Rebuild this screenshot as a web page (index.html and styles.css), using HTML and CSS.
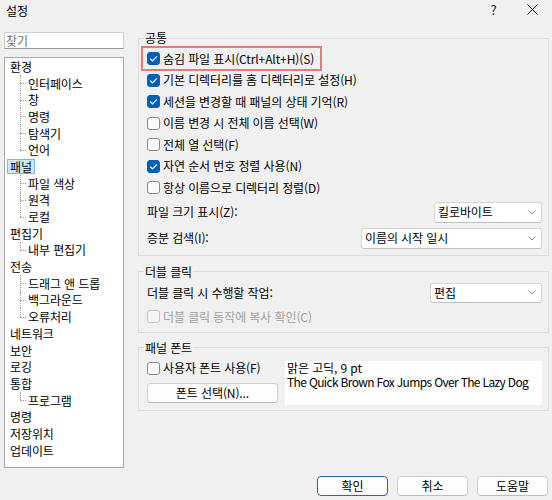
FILE: index.html
```html
<!DOCTYPE html>
<html lang="ko">
<head>
  <meta charset="UTF-8">
  <title>설정</title>
  <link rel="stylesheet" href="styles.css">
</head>
<body>
  <div class="dialog">
    <!-- Window caption -->
    <header class="titlebar">
      <span class="title">설정</span>
      <div class="caption-buttons">
        <span class="cap-btn">?</span>
        <span class="cap-btn">
          <svg width="11" height="11" viewBox="0 0 11 11"><path d="M0.5 0.5 L10.5 10.5 M10.5 0.5 L0.5 10.5" stroke="#1a1a1a" stroke-width="1" fill="none"/></svg>
        </span>
      </div>
    </header>

    <div class="main">
      <!-- Page navigation -->
      <aside class="nav">
        <div class="search">찾기</div>
        <ul class="tree">
          <li class="item"><span class="label">환경</span></li>
          <li class="item child"><span class="label">인터페이스</span></li>
          <li class="item child"><span class="label">창</span></li>
          <li class="item child"><span class="label">명령</span></li>
          <li class="item child"><span class="label">탐색기</span></li>
          <li class="item child last"><span class="label">언어</span></li>
          <li class="item"><span class="label selected">패널</span></li>
          <li class="item child"><span class="label">파일 색상</span></li>
          <li class="item child"><span class="label">원격</span></li>
          <li class="item child last"><span class="label">로컬</span></li>
          <li class="item"><span class="label">편집기</span></li>
          <li class="item child last"><span class="label">내부 편집기</span></li>
          <li class="item"><span class="label">전송</span></li>
          <li class="item child"><span class="label">드래그 앤 드롭</span></li>
          <li class="item child"><span class="label">백그라운드</span></li>
          <li class="item child last"><span class="label">오류처리</span></li>
          <li class="item"><span class="label">네트워크</span></li>
          <li class="item"><span class="label">보안</span></li>
          <li class="item"><span class="label">로깅</span></li>
          <li class="item"><span class="label">통합</span></li>
          <li class="item child last"><span class="label">프로그램</span></li>
          <li class="item"><span class="label">명령</span></li>
          <li class="item"><span class="label">저장위치</span></li>
          <li class="item"><span class="label">업데이트</span></li>
        </ul>
      </aside>

      <!-- Panels page -->
      <section class="page">
        <fieldset class="group group-common">
          <legend>공통</legend>
          <div class="check highlighted">
            <span class="box checked"><svg width="13" height="13" viewBox="0 0 13 13"><path d="M3.2 6.6 L5.5 8.9 L9.9 4.4" stroke="#fff" stroke-width="1.3" fill="none"/></svg></span>
            숨김 파일 표시(Ctrl+Alt+H)(S)
          </div>
          <div class="check">
            <span class="box checked"><svg width="13" height="13" viewBox="0 0 13 13"><path d="M3.2 6.6 L5.5 8.9 L9.9 4.4" stroke="#fff" stroke-width="1.3" fill="none"/></svg></span>
            기본 디렉터리를 홈 디렉터리로 설정(H)
          </div>
          <div class="check">
            <span class="box checked"><svg width="13" height="13" viewBox="0 0 13 13"><path d="M3.2 6.6 L5.5 8.9 L9.9 4.4" stroke="#fff" stroke-width="1.3" fill="none"/></svg></span>
            세션을 변경할 때 패널의 상태 기억(R)
          </div>
          <div class="check">
            <span class="box"></span>
            이름 변경 시 전체 이름 선택(W)
          </div>
          <div class="check">
            <span class="box"></span>
            전체 열 선택(F)
          </div>
          <div class="check">
            <span class="box checked"><svg width="13" height="13" viewBox="0 0 13 13"><path d="M3.2 6.6 L5.5 8.9 L9.9 4.4" stroke="#fff" stroke-width="1.3" fill="none"/></svg></span>
            자연 순서 번호 정렬 사용(N)
          </div>
          <div class="check">
            <span class="box"></span>
            항상 이름으로 디렉터리 정렬(D)
          </div>
          <div class="field field-first">
            <span>파일 크기 표시(Z):</span>
            <div class="select select-size">
              <span>킬로바이트</span>
              <svg width="8" height="5" viewBox="0 0 8 5"><path d="M0.5 0.5 L4 4 L7.5 0.5" stroke="#8a8a8a" stroke-width="1" fill="none"/></svg>
            </div>
          </div>
          <div class="field">
            <span>증분 검색(I):</span>
            <div class="select select-search">
              <span>이름의 시작 일시</span>
              <svg width="8" height="5" viewBox="0 0 8 5"><path d="M0.5 0.5 L4 4 L7.5 0.5" stroke="#8a8a8a" stroke-width="1" fill="none"/></svg>
            </div>
          </div>
        </fieldset>

        <fieldset class="group group-dblclick">
          <legend>더블 클릭</legend>
          <div class="field field-short">
            <span>더블 클릭 시 수행할 작업:</span>
            <div class="select select-action">
              <span>편집</span>
              <svg width="8" height="5" viewBox="0 0 8 5"><path d="M0.5 0.5 L4 4 L7.5 0.5" stroke="#8a8a8a" stroke-width="1" fill="none"/></svg>
            </div>
          </div>
          <div class="check check-tall disabled">
            <span class="box"></span>
            더블 클릭 동작에 복사 확인(C)
          </div>
        </fieldset>

        <fieldset class="group group-font">
          <legend>패널 폰트</legend>
          <div class="font-row">
            <div class="font-controls">
              <div class="check check-short">
                <span class="box"></span>
                사용자 폰트 사용(F)
              </div>
              <div class="button button-wide">폰트 선택(N)...</div>
            </div>
            <div class="font-preview">
              <div>맑은 고딕, 9 pt</div>
              <div class="sample">The Quick Brown Fox Jumps Over The Lazy Dog</div>
            </div>
          </div>
        </fieldset>
      </section>
    </div>

    <footer class="buttons">
      <div class="button default">확인</div>
      <div class="button">취소</div>
      <div class="button">도움말</div>
    </footer>
  </div>
</body>
</html>
```

FILE: styles.css
```css
* {
  box-sizing: border-box;
}
html, body {
  margin: 0;
  padding: 0;
}
body {
  width: 552px;
  height: 500px;
  overflow: hidden;
  background: #f0f0f0;
  color: #000;
  font-family: "Noto Sans CJK KR", "Noto Sans", sans-serif;
  font-size: 12px;
  line-height: 14px;
  letter-spacing: -0.1px;
}

/* Caption */
.titlebar {
  height: 26px;
  display: flex;
  justify-content: space-between;
  align-items: flex-start;
  padding-left: 6px;
}
.title {
  margin-top: 4px;
}
.caption-buttons {
  display: flex;
}
.cap-btn {
  width: 39px;
  height: 19px;
  display: flex;
  align-items: center;
  justify-content: center;
  font-size: 13px;
  color: #1a1a1a;
}

/* Layout */
.main {
  display: flex;
  gap: 14px;
  padding: 5px 0 0 4px;
}
.nav {
  width: 120px;
  flex: none;
}
.search {
  margin-top: 1px;
  height: 17px;
  background: #fff;
  border: 1px solid #cfcfcf;
  border-bottom-color: #9a9a9a;
  color: #6d6d6d;
  padding: 0 1px;
  line-height: 15px;
}

/* Tree */
.tree {
  list-style: none;
  margin: 8px 0 0;
  padding: 0 0 0 2px;
  height: 411px;
  background: #fff;
  border: 1px solid #a9a9a9;
}
.item {
  position: relative;
  height: 16.7px;
  display: flex;
  align-items: center;
}
.label {
  display: inline-block;
  padding: 0 2px;
  line-height: 13px;
  border: 1px solid transparent;
  white-space: nowrap;
}
.label.selected {
  background: #cce8ff;
  border-color: #7fb8e8;
}
.child {
  padding-left: 18px;
}
/* dotted connectors */
.child::before {
  content: "";
  position: absolute;
  left: 13px;
  top: 0;
  height: 100%;
  border-left: 1px dotted #a0a0a0;
}
.child.last::before {
  height: 50%;
}
.child::after {
  content: "";
  position: absolute;
  left: 13px;
  top: 50%;
  width: 6px;
  border-top: 1px dotted #a0a0a0;
}

/* Page */
.page {
  flex: 1;
  min-width: 0;
  display: flex;
  flex-direction: column;
  padding-right: 3px;
}
.group {
  margin: 0;
  min-width: 0;
  border: 1px solid #dcdcdc;
  padding: 0 6px 0 8px;
}
.group legend {
  padding: 0 1px;
  margin-left: -3px;
  line-height: 14px;
}
.group-common {
  padding-top: 3px;
  padding-bottom: 6px;
}
.group-dblclick {
  margin-top: 9px;
  padding-bottom: 4px;
}
.group-font {
  margin-top: 8px;
  padding-top: 6px;
  padding-bottom: 5px;
}

/* Checkboxes */
.check {
  height: 21.5px;
  display: flex;
  align-items: center;
  white-space: nowrap;
}
.check-tall {
  height: 22px;
  margin-top: 3px;
}
.check-short {
  height: 15px;
}
.box {
  width: 13px;
  height: 13px;
  flex: none;
  margin-right: 3px;
  border: 1px solid #8a8a8a;
  border-radius: 3px;
  background: #fbfbfb;
  display: flex;
}
.box.checked {
  background: #005fb8;
  border-color: #005fb8;
}
.box svg {
  margin: -1px;
}
.disabled {
  color: #a0a0a0;
}
.disabled .box {
  border-color: #c6c6c6;
  background: #f5f5f5;
}
.highlighted {
  position: relative;
}
.highlighted::after {
  content: "";
  position: absolute;
  left: -6px;
  top: -2px;
  bottom: -1px;
  width: 177px;
  border: 2px solid #e47b7b;
}

/* Labelled dropdowns */
.field {
  display: flex;
  align-items: center;
  justify-content: space-between;
  height: 21px;
  margin-top: 5px;
}
.field-first {
  margin-top: 3px;
}
.field-short {
  height: 20px;
  margin-top: 4px;
}
.select {
  height: 100%;
  display: flex;
  align-items: center;
  justify-content: space-between;
  padding: 0 5px 0 3px;
  background: #fff;
  border: 1px solid #d5d5d5;
  border-bottom-color: #c2c2c2;
  border-radius: 3px;
}
.select-size {
  width: 108px;
}
.select-search {
  width: 181px;
}
.select-action {
  width: 112px;
}

/* Panel font */
.font-row {
  display: flex;
  gap: 7px;
}
.font-controls {
  width: 131px;
  flex: none;
}
.font-controls .button {
  margin-top: 7.5px;
}
.font-preview {
  flex: 1;
  min-width: 0;
  height: 44px;
  background: #fff;
  padding: 0 2px;
  white-space: nowrap;
}
.sample {
  letter-spacing: -0.65px;
}

/* Buttons */
.button {
  height: 20px;
  display: flex;
  align-items: center;
  justify-content: center;
  background: #fdfdfd;
  border: 1px solid #d0d0d0;
  border-bottom-color: #bdbdbd;
  border-radius: 4px;
}
.button-wide {
  width: 131px;
}
.buttons {
  display: flex;
  justify-content: flex-end;
  gap: 9px;
  padding: 8px 4px 0 0;
}
.buttons .button {
  width: 71px;
}
.button.default {
  border-color: #2b65a3;
}
```
